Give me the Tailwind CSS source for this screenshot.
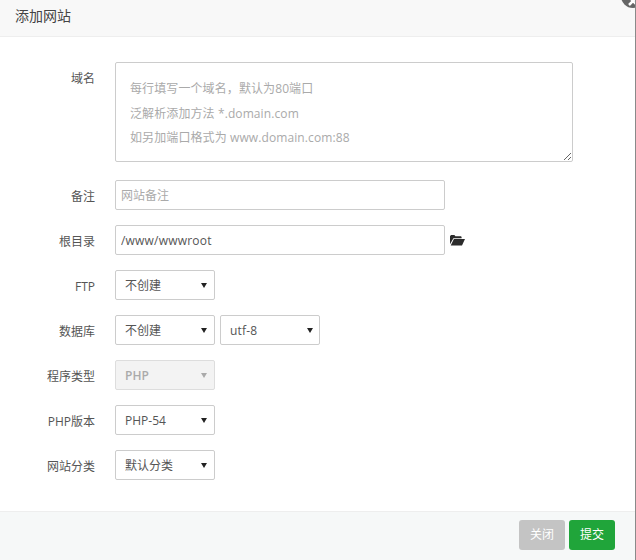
<!DOCTYPE html>
<html lang="zh-CN">
<head>
<meta charset="utf-8">
<script src="https://cdn.jsdelivr.net/npm/@tailwindcss/browser@4"></script>
<title>添加网站</title>
</head>
<body class="bg-white">
<div class="relative w-[636px] h-[560px] overflow-hidden flex flex-col border-r border-[#8a8a8a] bg-white text-[12px] text-[#555] font-['Open_Sans','Noto_Sans_CJK_SC',sans-serif]">
  <div class="h-[37px] shrink-0 bg-[#f8f8f8] border-b border-[#eee] pl-[15px] pt-[7px] text-[14px] leading-[18px] text-[#444]">添加网站</div>
  <svg class="absolute right-[-10px] top-[-16px]" width="24" height="24" viewBox="0 0 24 24"><circle cx="12" cy="12" r="12" fill="#666"/><path d="M8 13 16 21M16 13 8 21" stroke="#fff" stroke-width="2.500" fill="none"/></svg>

  <form class="flex-1 flex flex-col gap-[15px] pt-[25px]">
    <div class="flex mb-[3px]">
      <label class="w-[95px] text-right leading-[34px]">域名</label>
      <textarea class="ml-[20px] w-[458px] h-[100px] border border-[#ccc] rounded-[2px] pl-[14px] pt-[14px] leading-[24.500px] text-[12px] tracking-[0.1px] placeholder:text-[#aaa] outline-none" placeholder="每行填写一个域名，默认为80端口&#10;泛解析添加方法 *.domain.com&#10;如另加端口格式为 www.domain.com:88"></textarea>
    </div>
    <div class="flex h-[30px]">
      <label class="w-[95px] text-right leading-[34px]">备注</label>
      <input class="ml-[20px] w-[330px] h-[30px] border border-[#ccc] rounded-[2px] px-[5px] text-[12px] placeholder:text-[#aaa] outline-none" placeholder="网站备注">
    </div>
    <div class="flex h-[30px]">
      <label class="w-[95px] text-right leading-[34px]">根目录</label>
      <input class="ml-[20px] w-[330px] h-[30px] border border-[#ccc] rounded-[2px] px-[5px] text-[12px] tracking-[0.2px] outline-none" value="/www/wwwroot">
      <svg class="ml-[5px] mt-[9px]" width="15" height="12" viewBox="0 0 15 12"><path fill="#2b2b2b" d="M0 2.200 1 1h3.400l1 1.300H11l.6.6v1.300H3.400L0 10.300zM3.900 5H15l-3 6.500H.7z"/></svg>
    </div>
    <div class="flex h-[30px]">
      <label class="w-[95px] text-right leading-[34px]">FTP</label>
      <div class="relative ml-[20px] w-[100px]">
        <select class="appearance-none w-full h-[30px] border border-[#ccc] rounded-[2px] pl-[9px] pt-[2px] bg-white text-[12px] outline-none"><option>不创建</option></select>
        <svg class="absolute right-[8px] top-[13px] pointer-events-none" width="6" height="5" viewBox="0 0 6 5"><path fill="#222" d="M0 0h6L3 5z"/></svg>
      </div>
    </div>
    <div class="flex h-[30px]">
      <label class="w-[95px] text-right leading-[34px]">数据库</label>
      <div class="relative ml-[20px] w-[100px]">
        <select class="appearance-none w-full h-[30px] border border-[#ccc] rounded-[2px] pl-[9px] pt-[2px] bg-white text-[12px] outline-none"><option>不创建</option></select>
        <svg class="absolute right-[8px] top-[13px] pointer-events-none" width="6" height="5" viewBox="0 0 6 5"><path fill="#222" d="M0 0h6L3 5z"/></svg>
      </div>
      <div class="relative ml-[5px] w-[100px]">
        <select class="appearance-none w-full h-[30px] border border-[#ccc] rounded-[2px] pl-[9px] pt-[2px] bg-white text-[12px] tracking-[0.2px] outline-none"><option>utf-8</option></select>
        <svg class="absolute right-[7px] top-[13px] pointer-events-none" width="6" height="5" viewBox="0 0 6 5"><path fill="#222" d="M0 0h6L3 5z"/></svg>
      </div>
    </div>
    <div class="flex h-[30px]">
      <label class="w-[95px] text-right leading-[34px]">程序类型</label>
      <div class="relative ml-[20px] w-[100px]">
        <select disabled class="appearance-none w-full h-[30px] border border-[#ddd] rounded-[2px] pl-[9px] pt-[2px] bg-[#f3f3f3] text-[#aaa] opacity-100 text-[12px] font-semibold outline-none"><option>PHP</option></select>
        <svg class="absolute right-[8px] top-[13px] pointer-events-none" width="6" height="5" viewBox="0 0 6 5"><path fill="#aaa" d="M0 0h6L3 5z"/></svg>
      </div>
    </div>
    <div class="flex h-[30px]">
      <label class="w-[95px] text-right leading-[34px]">PHP版本</label>
      <div class="relative ml-[20px] w-[100px]">
        <select class="appearance-none w-full h-[30px] border border-[#ccc] rounded-[2px] pl-[9px] pt-[2px] bg-white text-[12px] outline-none"><option>PHP-54</option></select>
        <svg class="absolute right-[8px] top-[13px] pointer-events-none" width="6" height="5" viewBox="0 0 6 5"><path fill="#222" d="M0 0h6L3 5z"/></svg>
      </div>
    </div>
    <div class="flex h-[30px]">
      <label class="w-[95px] text-right leading-[34px]">网站分类</label>
      <div class="relative ml-[20px] w-[100px]">
        <select class="appearance-none w-full h-[30px] border border-[#ccc] rounded-[2px] pl-[9px] pt-[2px] bg-white text-[12px] outline-none"><option>默认分类</option></select>
        <svg class="absolute right-[8px] top-[13px] pointer-events-none" width="6" height="5" viewBox="0 0 6 5"><path fill="#222" d="M0 0h6L3 5z"/></svg>
      </div>
    </div>
  </form>

  <div class="h-[49px] shrink-0 bg-[#f6f8f8] border-t border-[#eee] flex justify-end items-start gap-[4px] pr-[20px] pt-[8px]">
    <button class="w-[46px] h-[30px] rounded-[3px] bg-[#c4c4c4] text-white text-[12px]">关闭</button>
    <button class="w-[46px] h-[30px] rounded-[3px] bg-[#20a53a] text-white text-[12px]">提交</button>
  </div>
</div>
</body>
</html>
